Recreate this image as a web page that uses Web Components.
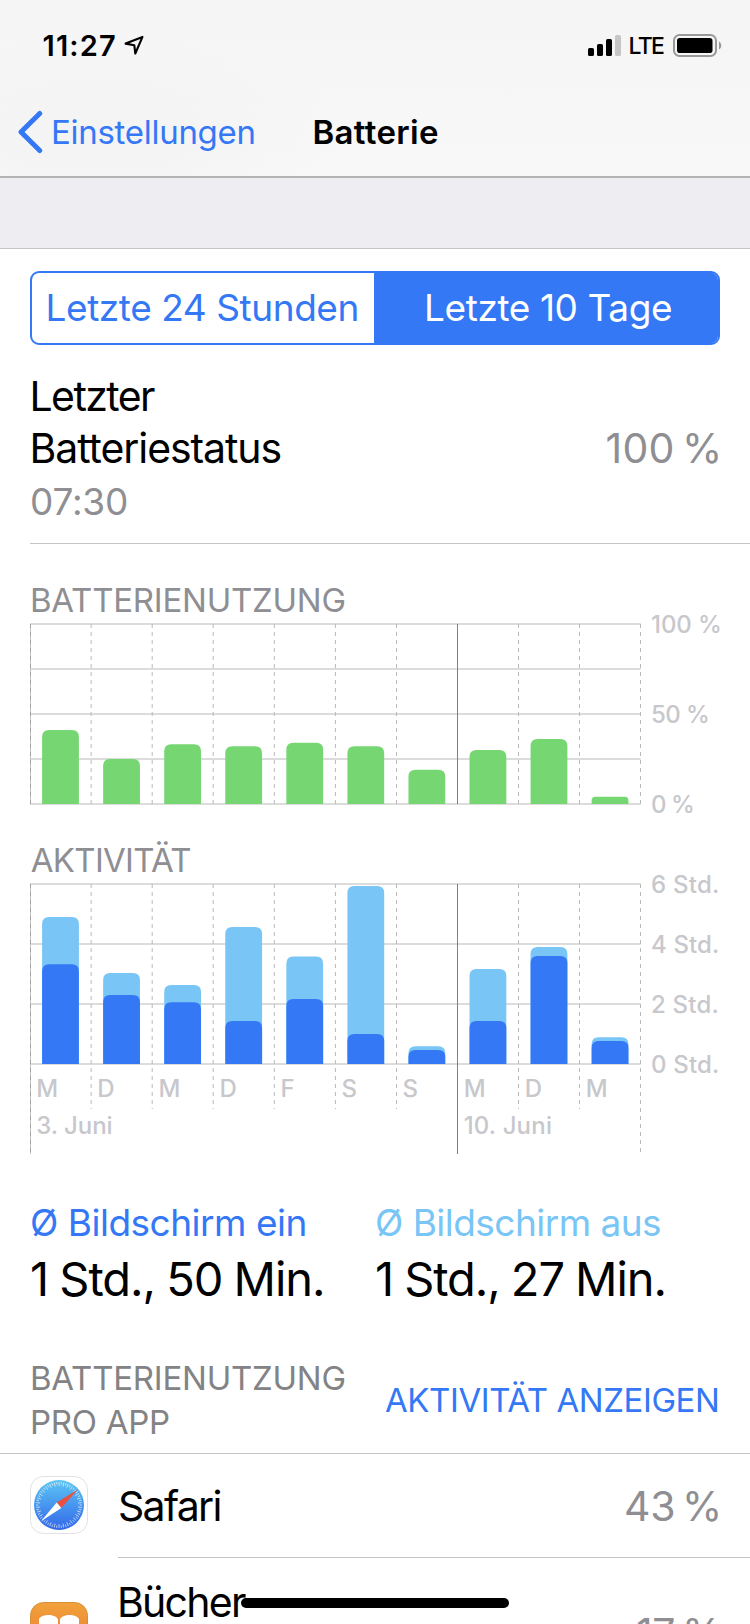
<!DOCTYPE html>
<html lang="de">
<head>
<meta charset="utf-8">
<title>Batterie</title>
<style>
html,body{margin:0;padding:0;background:#fff;overflow:hidden;height:1624px}
body{font-family:Inter,"Noto Sans","Liberation Sans",sans-serif;color:#000}
</style>
</head>
<body>
<battery-screen></battery-screen>
<script>
const BLUE = '#3478f6', SKY = '#78c5f6', GREEN = '#76d672';
const define = (name, html, setup) => {
  const template = document.createElement('template');
  template.innerHTML = html;
  customElements.define(name, class extends HTMLElement {
    connectedCallback() {
      if (this.shadowRoot) return;
      this.attachShadow({ mode: 'open' }).append(template.content.cloneNode(true));
      if (setup) setup(this, this.shadowRoot);
    }
  });
};

/* A line of text tracked to a given optical width, flush with its box on both sides.
   "space" widens or narrows the word gaps. */
const pen = document.createElement('canvas').getContext('2d');
define('fit-text', `
<style>:host{display:block;white-space:nowrap;flex:none}span{display:inline-block}</style>
<span><slot></slot></span>`, (host, root) => {
  const size = +host.getAttribute('size'), width = +host.getAttribute('width');
  const weight = host.getAttribute('weight') || '400';
  const line = host.getAttribute('line') || Math.round(size * 1.25);
  const space = +host.getAttribute('space') || 0;
  const text = host.textContent;
  pen.font = `${weight} ${size}px Inter`;
  const m = pen.measureText(text);
  const ink = m.actualBoundingBoxLeft + m.actualBoundingBoxRight + space * (text.split(' ').length - 1);
  const gaps = text.length - 1;
  const track = gaps && width ? (width - ink) / gaps : 0;
  host.style.cssText += `;font-size:${size}px;font-weight:${weight};line-height:${line}px;height:${line}px;width:${width || Math.ceil(ink)}px`;
  const span = root.querySelector('span');
  span.style.letterSpacing = track + 'px';
  span.style.wordSpacing = space + 'px';
  span.style.marginLeft = m.actualBoundingBoxLeft + 'px';
});

define('status-bar', `
<style>
:host{display:flex;align-items:center;height:85px;padding:3px 28px 0 43.500px}
svg{flex:none;display:block}
.arrow{margin-left:8px}
.right{margin-left:auto;display:flex;align-items:center}
.lte{margin:2px 9px 0 8.500px}
</style>
<fit-text size="29" weight="600" width="71.500">11:27</fit-text>
<svg class="arrow" width="22" height="23" viewBox="0 0 22 23"><path d="M19.500 2.900 2.600 9.600l8.700 1.600 1 8.300z" fill="none" stroke="#000" stroke-width="2.100" stroke-linejoin="round"/></svg>
<div class="right">
<svg width="33" height="23" viewBox="0 0 33 23"><rect y="14" width="6" height="8" rx="1.6"/><rect x="9" y="10" width="6" height="12" rx="1.6"/><rect x="18" y="5" width="6" height="17" rx="1.6"/><rect x="27" y="1" width="6" height="21" rx="1.6" fill="#c6c6c6"/></svg>
<fit-text class="lte" size="23" weight="500" width="34.500">LTE</fit-text>
<svg width="49" height="23" viewBox="0 0 49 23"><rect x="1" y="1" width="42" height="21" rx="5.5" fill="none" stroke="#999" stroke-width="2"/><rect x="4" y="4" width="35.500" height="15" rx="2.8"/><path d="M46 7.500c3 1.400 3 6.600 0 8z" fill="#999"/></svg>
</div>`);

define('nav-bar', `
<style>
:host{display:grid;grid-template-columns:1fr auto 1fr;align-items:center;height:88px;border-bottom:2px solid #b4b4b5;padding:0 14.500px 0 17px}
.back{display:flex;align-items:center;gap:10.500px;color:${BLUE};margin-left:-.5px}
svg{display:block}
</style>
<div class="back"><svg width="26" height="44" viewBox="0 0 26 44"><path d="M22.700 3.500 4 22 22.700 40.500" fill="none" stroke="${BLUE}" stroke-width="5" stroke-linecap="round" stroke-linejoin="round"/></svg><fit-text size="33" width="200.500">Einstellungen</fit-text></div>
<fit-text size="33" weight="600" width="123.500">Batterie</fit-text>`);

define('segmented-control', `
<style>
:host{display:grid;grid-template-columns:1fr 1fr;box-sizing:border-box;height:74px;margin:22px 30px 0;border:2px solid ${BLUE};border-radius:9px;overflow:hidden;color:${BLUE}}
div{display:flex;align-items:center;justify-content:center}
.off{padding-right:2px}
.on{background:${BLUE};color:#fff;box-shadow:-1px 0 ${BLUE};padding-left:5px}
</style>
<div class="off"><fit-text size="37" width="308">Letzte 24 Stunden</fit-text></div>
<div class="on"><fit-text size="37" width="244">Letzte 10 Tage</fit-text></div>`);

define('last-charge', `
<style>
:host{display:grid;grid-template-columns:1fr auto;grid-template-rows:52px 52px 55px;margin-left:30px;padding:25px 32px 14px 2px;position:relative;color:#8e8e93}
:host::after{content:"";position:absolute;left:0;right:0;bottom:-1px;height:1px;background:#c4c4c6}
.t{color:#000;grid-column:1;margin-left:.5px}
</style>
<fit-text class="t" size="41" line="52" width="122.500">Letzter</fit-text>
<fit-text class="t" size="41" line="52" width="248">Batteriestatus</fit-text>
<fit-text size="41" line="52" width="111.500" space="-4.500">100 %</fit-text>
<fit-text size="37" line="55" width="95">07:30</fit-text>`);

/* Bar chart over ten days. Bars are rows of top offsets, measured from the plot's top. */
define('day-chart', `
<style>
:host{display:block;margin-left:30px}
.head{padding-left:2px;color:#8e8e93}
:host(.second) .head{padding-left:.8px}
.area{display:grid;grid-template-columns:622px 1fr;align-items:start;margin-top:3px}
svg{grid-area:1/1;display:block}
.scale{grid-area:1/2;display:flex;flex-direction:column;justify-content:space-between;height:204px;margin:-10px 0 -12px;color:#c7c7cc}
.days{grid-area:1/1;display:grid;grid-template-columns:repeat(10,61.060px);grid-template-rows:45px 29px;padding-top:183px;align-items:center;justify-content:start;color:#c7c7cc}
.days fit-text{margin-left:7.300px}
</style>
<div class="head"></div>
<div class="area"><svg></svg><div class="scale"></div></div>`, (host, root) => {
  const read = k => JSON.parse(host.getAttribute(k) || 'null');
  const rows = +host.getAttribute('rows'), days = read('days');
  const height = days ? 271 : 182;
  root.querySelector('.area').style.height = height + 'px';
  root.querySelector('.head').innerHTML = `<fit-text size="33" line="40" width="${host.getAttribute('heading-width')}">${host.getAttribute('heading')}</fit-text>`;
  let s = '';
  for (let i = 0; i <= rows; i++) s += `<rect y="${i * 180 / rows}" width="610.700" height="2" fill="#dcdcdc"/>`;
  const xs = [.5, 61.1, 122.2, 183.2, 244.3, 305.4, 366.5, 427.5, 488.5, 549.5, 610.5];
  xs.forEach((x, i) => {
    const end = days ? (i % 10 === 0 || i === 7 ? 271 : 226) : 181;
    if (i === 7) s += `<path d="M${x} 1V${end}" stroke="#808080"/>`;
    else {
      if (i === 0) s += `<path d="M${x} 1V${end}" stroke="#c2c2c2"/>`;
      s += `<path d="M${x} 1V${end}" stroke="${i ? '#b9b9b9' : '#a2a2a2'}" stroke-dasharray="4 4"/>`;
    }
  });
  read('bars').forEach((set, k) => set.forEach((top, i) => {
    const x = 12.1 + i * 61.06, w = 36.8, r = Math.min(7, (181 - top) / 2);
    s += `<path d="M${x} 181V${top + r}q0-${r} ${r}-${r}h${w - 2 * r}q${r} 0 ${r} ${r}V181z" fill="${host.getAttribute('colors').split(' ')[k]}"/>`;
  }));
  const svg = root.querySelector('svg');
  svg.setAttribute('width', 612); svg.setAttribute('height', height);
  svg.setAttribute('viewBox', `0 0 612 ${height}`);
  svg.innerHTML = s;
  root.querySelector('.scale').innerHTML = read('scale').map(([t, w]) => `<fit-text size="24" weight="500" line="24" width="${w}">${t}</fit-text>`).join('');
  if (days) {
    const box = document.createElement('div');
    box.className = 'days';
    box.innerHTML = days.map(d => `<fit-text size="24" weight="500">${d}</fit-text>`).join('')
      + '<fit-text size="24" weight="500" width="74.500">3. Juni</fit-text><fit-text style="grid-column:8" size="24" weight="500" width="86.500">10. Juni</fit-text>';
    root.querySelector('.area').append(box);
  }
});

define('usage-summary', `
<style>
:host{display:grid;grid-template-columns:345px 1fr;margin:48px 0 0 32px}
.on{color:${BLUE}}.off{color:${SKY}}
</style>
<fit-text class="on" size="37" line="41" width="272.500">Ø Bildschirm ein</fit-text>
<fit-text class="off" size="37" line="41" width="283">Ø Bildschirm aus</fit-text>
<fit-text size="47" line="72" width="290" space="-1">1 Std., 50 Min.</fit-text>
<fit-text size="47" line="72" width="286.500" space="-1">1 Std., 27 Min.</fit-text>`);

define('list-header', `
<style>
:host{display:flex;justify-content:space-between;align-items:center;margin-top:41px;padding:0 33px 0 32px;height:97px;border-bottom:1px solid #c4c4c6;color:#838385}
div{margin-bottom:9px}
.link{color:${BLUE}}
</style>
<div><fit-text size="33" line="44" width="312.500">BATTERIENUTZUNG</fit-text><fit-text size="33" line="44" width="137">PRO APP</fit-text></div>
<div class="link"><fit-text size="33" line="44" width="332">AKTIVITÄT ANZEIGEN</fit-text></div>`);

define('app-row', `
<style>
:host{display:flex;height:104px;padding-left:30px;color:#000}
.icon{width:58px;margin-right:30px;display:flex;align-items:center;padding-bottom:2px}
.body{flex:1;display:flex;align-items:center;justify-content:space-between;border-bottom:1px solid #c4c4c6;padding:1px 32px 0 2px;color:#8e8e93}
::slotted([slot=name]){color:#000}
:host([tall]){height:148px}
:host([tall]) ::slotted([slot=name]){margin-bottom:59px}
:host([tall]) ::slotted([slot=value]){margin-top:2px}
</style>
<div class="icon"><slot name="icon"></slot></div>
<div class="body"><slot name="name"></slot><slot name="value"></slot></div>`);

define('safari-icon', `
<style>:host,svg{display:block}</style>
<svg width="58" height="58" viewBox="0 0 58 58">
<defs><linearGradient id="g" x2="0" y2="1"><stop stop-color="#5cc6f5"/><stop offset="1" stop-color="#3267e8"/></linearGradient></defs>
<rect x=".5" y=".5" width="57" height="57" rx="13" fill="#fff" stroke="#e2e2e4"/>
<circle cx="29" cy="29" r="25" fill="url(#g)"/>
<g id="t" stroke="#fff" stroke-width=".8" stroke-opacity=".75"></g>
<path d="M47.800 13.400 26.700 26.500 31.300 32z" fill="#e9503f"/><path d="M11 45.300 26.700 26.500 31.300 32z" fill="#fff"/>
</svg>`, (host, root) => {
  let s = '';
  for (let a = 0; a < 60; a++) s += `<path d="M29 6V${a % 2 ? 8.4 : 10}" transform="rotate(${a * 6} 29 29)"/>`;
  root.querySelector('#t').innerHTML = s;
});

define('books-icon', `
<style>:host,svg{display:block}</style>
<svg width="58" height="58" viewBox="0 0 58 58">
<defs><linearGradient id="b" x2="0" y2="1"><stop stop-color="#f1a23b"/><stop offset="1" stop-color="#ec7332"/></linearGradient></defs>
<rect x=".5" y=".5" width="57" height="57" rx="13" fill="url(#b)" stroke="#d58f37"/>
<path d="M28 42V17.500C26 11.500 12 11.500 9 17v25c5-4 14-4 19 0zM30 42V17.500C32 11.500 46 11.500 49 17v25c-5-4-14-4-19 0z" fill="#fff"/>
</svg>`);

define('home-indicator', `<style>:host{position:absolute;left:241px;top:1598px;width:268px;height:10px;border-radius:5px;background:#000}</style>`);

define('battery-screen', `
<style>
:host{display:block;position:relative;width:750px;height:1624px;overflow:hidden;background:#fff}
header{background:radial-gradient(ellipse 240px 100px at 100px 135px,#f3f3f3,#f3f3f300),linear-gradient(#f5f5f5,#f8f8f8)}
.band{height:70px;background:#eeedf2;border-bottom:1px solid #c4c4c6}
.first{margin-top:37px}.second{margin-top:35px}
</style>
<header><status-bar></status-bar><nav-bar></nav-bar></header>
<div class="band"></div>
<segmented-control></segmented-control>
<last-charge></last-charge>
<day-chart class="first" heading="BATTERIENUTZUNG" heading-width="312.500" rows="4" colors="${GREEN}"
 scale='[["100 %",68],["50 %",56],["0 %",41]]'
 bars="[[107,136,121.3,123.2,119.7,123.3,146.7,127,116,173.8]]"></day-chart>
<day-chart class="second" heading="AKTIVITÄT" heading-width="159.500" rows="3" colors="${SKY} ${BLUE}"
 scale='[["6 Std.",66],["4 Std.",66],["2 Std.",65.5],["0 Std.",66]]'
 bars="[[34,90,102,44,73.6,3,163.3,86,64,154.3],[81.3,112,119.2,138,116,151,167,138,73,158]]"
 days='["M","D","M","D","F","S","S","M","D","M"]'></day-chart>
<usage-summary></usage-summary>
<list-header></list-header>
<app-row><safari-icon slot="icon"></safari-icon><fit-text slot="name" size="41" width="100.500">Safari</fit-text><fit-text slot="value" size="41" width="92" space="-4.500">43 %</fit-text></app-row>
<app-row tall><books-icon slot="icon"></books-icon><fit-text slot="name" size="41" width="126">Bücher</fit-text><fit-text slot="value" size="41" width="81" space="-4.500">17 %</fit-text></app-row>
<home-indicator></home-indicator>`);
</script>
</body>
</html>
